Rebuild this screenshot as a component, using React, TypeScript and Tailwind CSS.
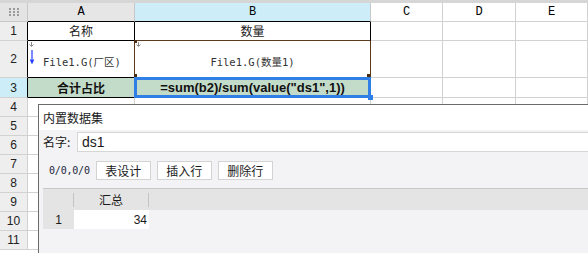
import React from "react";

const sans = "font-['Liberation_Sans','Noto_Sans_CJK_SC',sans-serif]";
const cjk = "font-['Noto_Sans_CJK_SC','Liberation_Sans',sans-serif]";
const mono = "font-['Liberation_Mono','Noto_Sans_CJK_SC',monospace]";
const cellMono = "font-['DejaVu_Sans_Mono','Noto_Sans_CJK_SC',monospace]";

const grid = "border-r border-b border-[#d2d2d2]";

function CornerDots() {
  return (
    <svg width="10" height="8" viewBox="0 0 10 8" fill="#9a9a9a">
      {[0, 4, 8].map((x) =>
        [0, 3, 6].map((y) => <rect key={`${x}-${y}`} x={x} y={y} width="2" height="2" />)
      )}
    </svg>
  );
}

function TinyArrow() {
  return (
    <svg width="5" height="5" viewBox="0 0 5 5" className="absolute left-[1px] top-[1px]">
      <path d="M2.5 0v4M0.5 2.5l2 2 2-2" stroke="#8a8a8a" strokeWidth="1" fill="none" />
    </svg>
  );
}

function Corner({ className }: { className: string }) {
  return <div className={`absolute h-[3px] w-[3px] bg-[#4a2d12] ${className}`} />;
}

function RowHead({ n, active }: { n: number; active?: boolean }) {
  return (
    <div
      className={`flex items-center justify-center text-[12px] text-[#222] ${sans} border-b border-r ${
        active ? "bg-[#cdeef9]" : "bg-[#eeeeee]"
      } ${n <= 3 ? "border-r-black border-b-[#d2d2d2]" : "border-[#d2d2d2]"}`}
    >
      {n}
    </div>
  );
}

function Blank() {
  return <div className={`bg-white ${grid}`} />;
}

export default function App() {
  return (
    <div className="relative h-[253px] w-[588px] overflow-hidden bg-white">
      <div className="h-[3px] bg-[#d6d6d6]" />
      <div className="grid grid-cols-[28px_107px_236px_72px_73px_72px] grid-rows-[19px_19px_37px_20px_repeat(8,19px)]">
        {/* column headers */}
        <div className="flex items-center justify-center border-b border-r border-[#c8c8c8] bg-[#e4e4e4]">
          <CornerDots />
        </div>
        <div className={`flex items-center justify-center border-b border-r border-r-[#c8c8c8] border-b-black bg-[#e6e6e6] text-[12px] ${mono}`}>A</div>
        <div className={`flex items-center justify-center border-b border-r border-r-[#c8c8c8] border-b-black bg-[#cdeef9] text-[12px] ${mono}`}>B</div>
        {["C", "D", "E"].map((c) => (
          <div key={c} className={`flex items-center justify-center bg-white text-[12px] ${mono} ${grid}`}>
            {c}
          </div>
        ))}

        {/* row 1 */}
        <RowHead n={1} />
        <div className={`flex items-center justify-center border-b border-r border-black text-[12px] text-[#222] ${cjk}`}>名称</div>
        <div className={`flex items-center justify-center border-b border-r border-r-black border-b-[#5b3a1e] text-[12px] text-[#222] ${cjk}`}>数量</div>
        <Blank />
        <Blank />
        <Blank />

        {/* row 2 */}
        <RowHead n={2} />
        <div className="relative flex items-start border-b border-r border-r-[#5b3a1e] border-b-black pl-[2px]">
          <TinyArrow />
          <svg width="4" height="14" viewBox="0 0 4 14" className="mt-[9px]">
            <path d="M2 0v13M0.3 9.5l1.7 3.5 1.7-3.5" stroke="#1f3cff" strokeWidth="1.2" fill="none" />
          </svg>
          <span className={`ml-[9px] mt-[15px] text-[10.5px] leading-[12px] text-[#333] ${cellMono}`}>File1.G(厂区)</span>
        </div>
        <div className="relative flex items-start justify-center border-b border-r border-[#5b3a1e]">
          <TinyArrow />
          <Corner className="-left-[1px] -top-[1px]" />
          <Corner className="-left-[1px] bottom-0" />
          <Corner className="right-0 bottom-0" />
          <span className={`mt-[15px] text-[10.5px] leading-[12px] text-[#333] ${cellMono}`}>File1.G(数量1)</span>
        </div>
        <Blank />
        <Blank />
        <Blank />

        {/* row 3 */}
        <RowHead n={3} active />
        <div className={`flex items-center justify-center border-b border-r border-black bg-[#c3dbc9] text-[12px] font-bold text-[#111] ${cjk}`}>合计占比</div>
        <div className={`relative flex items-center justify-center border-b border-r border-[#d2d2d2] bg-[#c3dbc9] text-[13px] font-bold text-[#111] ${sans}`}>
          =sum(b2)/sum(value("ds1",1))
          <div className="absolute -left-[1px] -top-[1px] -right-[1px] -bottom-[1px] border-[3px] border-[#2f7fe6]" />
          <div className="absolute -right-[3px] -bottom-[3px] h-[5px] w-[5px] bg-[#2f7fe6]" />
        </div>
        <Blank />
        <Blank />
        <Blank />

        {/* rows 4-11 */}
        {[4, 5, 6, 7, 8, 9, 10, 11].map((n) => (
          <React.Fragment key={n}>
            <RowHead n={n} />
            <Blank />
            <Blank />
            <Blank />
            <Blank />
            <Blank />
          </React.Fragment>
        ))}
      </div>

      {/* dataset dialog */}
      <div className={`absolute left-[38px] top-[104px] right-0 bottom-0 flex flex-col border-l border-t border-[#6b6b6b] bg-[#f3f3f5] text-[#1a1a1a] ${cjk}`}>
        <div className="flex h-[25px] shrink-0 items-center bg-white pl-[4px] text-[12px]">内置数据集</div>
        <div className="mt-[2px] flex h-[20px] shrink-0 items-center">
          <span className="w-[38px] pl-[4px] text-[12px]">名字:</span>
          <div className={`flex h-[20px] flex-1 items-center border border-r-0 border-[#d6d6d6] bg-white pl-[4px] text-[14px] ${sans}`}>ds1</div>
        </div>
        <div className="mt-[9px] flex h-[19px] shrink-0 items-center pl-[10px]">
          <span className={`text-[10px] tracking-[-0.2px] text-[#1d2740] ${cellMono}`}>0/0,0/0</span>
          <div className="ml-[6px] flex gap-[6px]">
            {["表设计", "插入行", "删除行"].map((b) => (
              <div key={b} className="flex h-[19px] w-[55px] items-center justify-center border border-[#d3d3d3] bg-white text-[12px]">
                {b}
              </div>
            ))}
          </div>
        </div>
        <div className="ml-[4px] mt-[8px] flex flex-col">
          <div className="flex h-[22px] items-center border-t border-[#c8c8c8] bg-[#e4e4e4]">
            <div className="w-[30px]" />
            <div className="h-[14px] w-px bg-[#c4c4c4]" />
            <div className="w-[74px] text-center text-[12px]">汇总</div>
            <div className="h-[14px] w-px bg-[#c4c4c4]" />
          </div>
          <div className="flex h-[19px]">
            <div className={`flex w-[31px] items-center justify-center bg-[#e4e4e4] text-[12px] ${sans}`}>1</div>
            <div className={`flex w-[75px] items-center justify-end bg-white pr-[2px] text-[12px] ${sans}`}>34</div>
          </div>
        </div>
      </div>
    </div>
  );
}
